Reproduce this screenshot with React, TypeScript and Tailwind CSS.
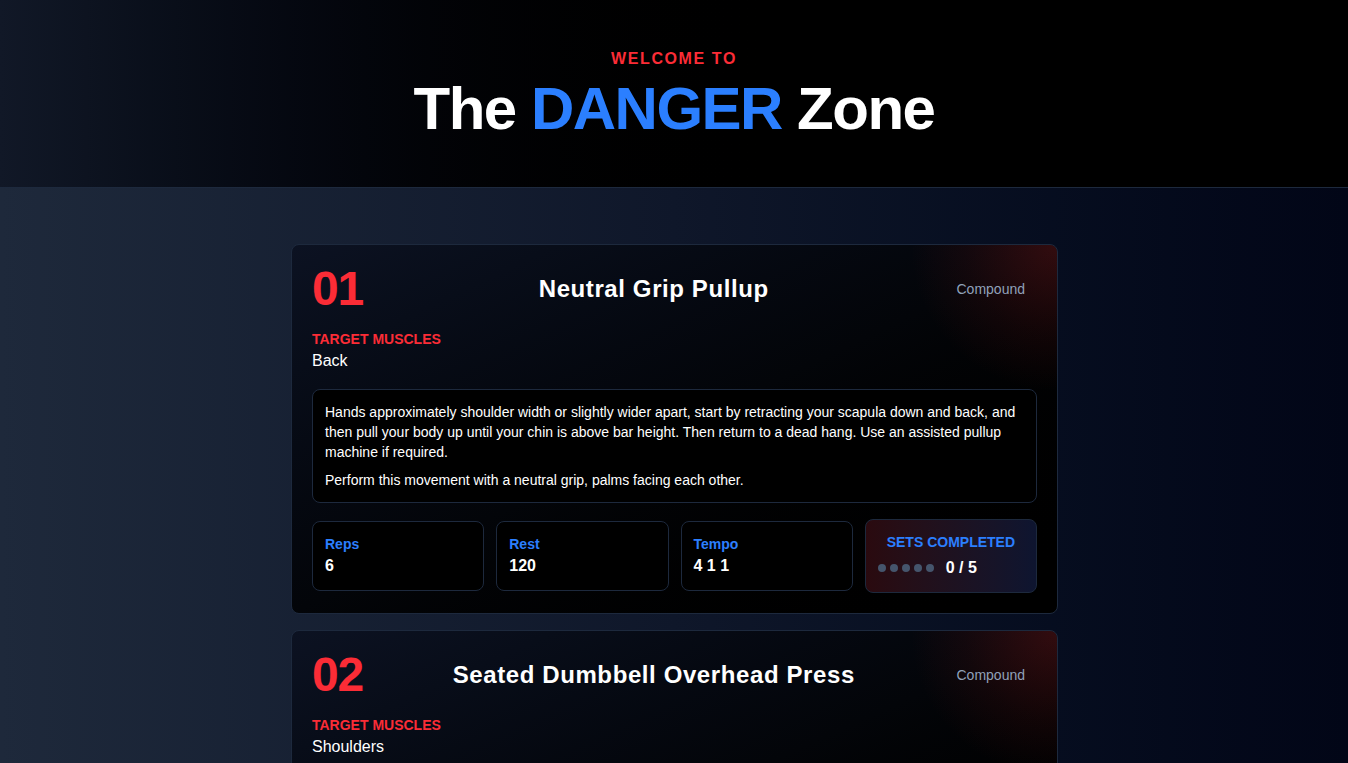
import React from 'react'

interface Exercise {
  name: string
  type: string
  muscles: string
  notes: string[]
  reps: string
  rest: string
  tempo: string
  sets: number
}

const exercises: Exercise[] = [
  {
    name: 'Neutral Grip Pullup',
    type: 'Compound',
    muscles: 'Back',
    notes: [
      'Hands approximately shoulder width or slightly wider apart, start by retracting your scapula down and back, and then pull your body up until your chin is above bar height. Then return to a dead hang. Use an assisted pullup machine if required.',
      'Perform this movement with a neutral grip, palms facing each other.',
    ],
    reps: '6',
    rest: '120',
    tempo: '4 1 1',
    sets: 5,
  },
  {
    name: 'Seated Dumbbell Overhead Press',
    type: 'Compound',
    muscles: 'Shoulders',
    notes: [
      'Sit upright on a bench with back support, dumbbells at shoulder height. Press the weights overhead until your arms are fully extended, then lower them back under control.',
      'Keep your core braced and avoid arching your lower back.',
    ],
    reps: '8',
    rest: '90',
    tempo: '3 1 1',
    sets: 4,
  },
]

function Stat({ label, value }: { label: string; value: string }) {
  return (
    <div className="rounded-lg border border-slate-800 bg-black p-3">
      <p className="text-sm font-semibold text-blue-500">{label}</p>
      <p className="text-base font-bold text-white">{value}</p>
    </div>
  )
}

function ExerciseCard({ ex, index }: { ex: Exercise; index: number }) {
  return (
    <div className="relative overflow-hidden rounded-lg border border-slate-800 bg-linear-to-br from-[#0c1222] via-[#030509] to-black p-5">
      <div className="pointer-events-none absolute top-0 right-0 h-36 w-36 bg-[radial-gradient(circle_at_top_right,rgba(220,38,38,0.22),rgba(220,38,38,0.07)_45%,transparent_72%)]" />
      <div className="relative">
        <div className="flex items-center">
          <span className="text-5xl leading-none font-bold tracking-tight text-red-500">
            {String(index + 1).padStart(2, '0')}
          </span>
          <h2 className="flex-1 text-center text-2xl font-bold tracking-wide text-white">{ex.name}</h2>
          <span className="px-3 py-1 text-sm text-slate-400">{ex.type}</span>
        </div>

        <div className="mt-4">
          <p className="text-sm font-bold text-red-500 uppercase">Target Muscles</p>
          <p className="text-base text-white">{ex.muscles}</p>
        </div>

        <div className="mt-4 space-y-2 rounded-lg border border-slate-800 bg-black p-3 text-sm text-white">
          {ex.notes.map((n, i) => (
            <p key={i}>{n}</p>
          ))}
        </div>

        <div className="mt-4 grid grid-cols-4 items-center gap-3">
          <Stat label="Reps" value={ex.reps} />
          <Stat label="Rest" value={ex.rest} />
          <Stat label="Tempo" value={ex.tempo} />
          <div className="rounded-lg border border-slate-800 bg-linear-to-r from-[#2a0a0f] to-[#0e1530] p-3">
            <p className="text-center text-sm font-bold text-blue-500 uppercase">Sets Completed</p>
            <div className="mt-1 flex items-center gap-3">
              <div className="flex gap-1">
                {Array.from({ length: ex.sets }).map((_, i) => (
                  <span key={i} className="h-2 w-2 rounded-full bg-slate-600" />
                ))}
              </div>
              <span className="text-base font-bold text-white">0 / {ex.sets}</span>
            </div>
          </div>
        </div>
      </div>
    </div>
  )
}

export default function App() {
  return (
    <div className="min-h-screen bg-linear-to-r from-[#1e293b] via-[#0f172a] to-[#020617] font-['Liberation_Sans',Arial,sans-serif]">
      <header className="border-b border-slate-800 bg-linear-to-r from-[#111827] via-black via-60% to-black pt-[47px] pb-12 text-center">
        <p className="mb-2 text-base font-bold tracking-widest text-red-500 uppercase">Welcome to</p>
        <h1 className="text-6xl leading-none font-bold tracking-tight text-white">
          The <span className="text-blue-500">DANGER</span> Zone
        </h1>
      </header>

      <main className="mx-auto max-w-3xl space-y-4 py-14 pl-px">
        {exercises.map((ex, i) => (
          <ExerciseCard key={ex.name} ex={ex} index={i} />
        ))}
      </main>
    </div>
  )
}
